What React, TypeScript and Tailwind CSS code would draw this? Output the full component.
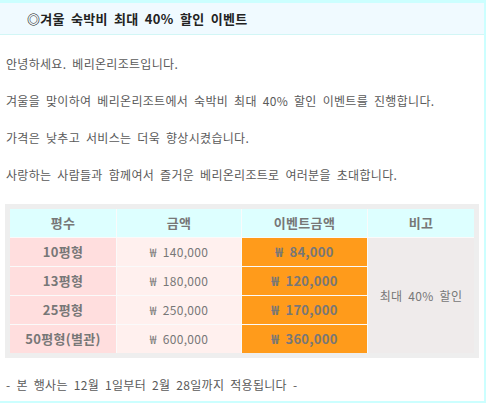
import React from "react";

const ROWS = [
  { size: "10평형", price: "₩ 140,000", event: "₩ 84,000" },
  { size: "13평형", price: "₩ 180,000", event: "₩ 120,000" },
  { size: "25평형", price: "₩ 250,000", event: "₩ 170,000" },
  { size: "50평형(별관)", price: "₩ 600,000", event: "₩ 360,000" },
];

const PARAGRAPHS = [
  "안녕하세요. 베리온리조트입니다.",
  "겨울을 맞이하여 베리온리조트에서 숙박비 최대 40% 할인 이벤트를 진행합니다.",
  "가격은 낮추고 서비스는 더욱 향상시켰습니다.",
  "사랑하는 사람들과 함께여서 즐거운 베리온리조트로 여러분을 초대합니다.",
];

export default function App() {
  return (
    <div className="box-border h-[403px] w-[486px] overflow-hidden border-t-[3px] border-r-[2px] border-b-[2px] border-[#ccffff] bg-white font-['Noto_Sans_CJK_KR',sans-serif] tracking-[0.3px] [word-spacing:3px]">
      <div className="flex h-[32px] items-center border-b border-[#d2f6f6] bg-[#f0faff] pl-[27px] text-[13px] font-bold text-[#222]">
        ◎겨울 숙박비 최대 40% 할인 이벤트
      </div>

      <div className="flex flex-col gap-[21px] px-[6px] pt-[21px] text-[12px] leading-[16px] text-[#5a5a5a]">
        {PARAGRAPHS.map((text) => (
          <p key={text}>{text}</p>
        ))}
      </div>

      <div className="mx-[5px] mt-[21px] bg-[#eeeeee] p-[5px]">
        <div className="grid grid-cols-[106px_124px_125px_106px] gap-px bg-[#fafafa] text-[12px] text-[#777]">
          {["평수", "금액", "이벤트금액", "비고"].map((label) => (
            <div
              key={label}
              className="flex h-[28px] items-center justify-center bg-[#ddffff] text-[13px] font-bold"
            >
              {label}
            </div>
          ))}
          {ROWS.map((row, index) => (
            <React.Fragment key={row.size}>
              <div className="flex h-[28px] items-center justify-center bg-[#ffdede] text-[13px] font-bold">
                {row.size}
              </div>
              <div className="flex h-[28px] items-center justify-center bg-[#fff0ee]">
                {row.price}
              </div>
              <div className="flex h-[28px] items-center justify-center bg-[#ff9b1b] text-[13px] font-bold">
                {row.event}
              </div>
              {index === 0 && (
                <div className="row-span-4 flex items-center justify-center bg-[#efebeb]">
                  최대 40% 할인
                </div>
              )}
            </React.Fragment>
          ))}
        </div>
      </div>

      <p className="mt-[19px] px-[6px] text-[12px] leading-[16px] text-[#5a5a5a]">
        - 본 행사는 12월 1일부터 2월 28일까지 적용됩니다 -
      </p>
    </div>
  );
}
